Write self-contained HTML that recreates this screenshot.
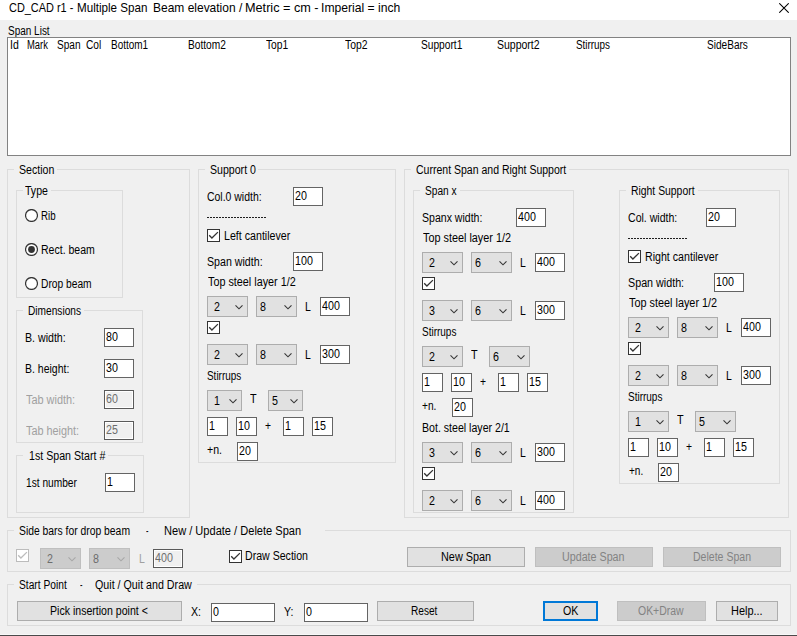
<!DOCTYPE html><html><head><meta charset="utf-8"><style>
*{margin:0;padding:0;box-sizing:border-box}
html,body{width:797px;height:636px;overflow:hidden;background:#f0f0f0;font-family:"Liberation Sans",sans-serif;font-size:12px;color:#000}
body{position:relative}
.titlebar{position:absolute;left:0;top:0;width:797px;height:20px;background:#fff}
.t{position:absolute;white-space:nowrap;line-height:14px;transform-origin:0 0}
.dtx{color:#a0a0a0}
.dtx2{color:#6d6d6d}
.dtx3{color:#838383}
.gap{position:absolute;height:1px;background:#f0f0f0}
.gb{position:absolute;border:1px solid #dcdcdc}
.lv{position:absolute;background:#fff;border:1px solid #828282}
.tb{position:absolute;background:#fff;border:1px solid #646464}
.tb.dis{background:#f0f0f0;border-color:#5a5a5a;box-shadow:inset 0 0 0 1px #fff}
.cb{position:absolute;background:#e1e1e1;border:1px solid #adadad}
.cb .arr{position:absolute}
.cb.dis{background:#cccccc;border-color:#bfbfbf}
.ck{position:absolute}
.bt{position:absolute;background:#e1e1e1;border:1px solid #adadad}
.bt.dis{background:#cccccc;border-color:#bfbfbf}
.bt.foc{border:2px solid #0078d7}
.dash{position:absolute;height:1px;background:repeating-linear-gradient(90deg,#1e1e1e 0 2px,transparent 2px 3px)}
.bot1{position:absolute;left:0;top:634px;width:797px;height:1px;background:#f8f8f8}
.bot2{position:absolute;left:0;top:635px;width:797px;height:1px;background:#4a4a4a}
</style></head><body>
<div class="titlebar"></div>
<div class="t " style="left:8.80px;top:1px;transform:scaleX(0.8408);font-size:13px">CD_CAD r1 -</div>
<div class="t " style="left:77.30px;top:1px;transform:scaleX(0.8950);font-size:13px">Multiple Span</div>
<div class="t " style="left:152.78px;top:1px;transform:scaleX(0.9218);font-size:13px">Beam elevation /</div>
<div class="t " style="left:244.92px;top:1px;transform:scaleX(0.9751);font-size:13px">Metric = cm -</div>
<div class="t " style="left:321.17px;top:1px;transform:scaleX(0.9346);font-size:13px">Imperial = inch</div>
<svg style="position:absolute;left:779px;top:3px" width="10" height="10" viewBox="0 0 10 10"><path d="M0.3 0.3 L9.7 9.7 M9.7 0.3 L0.3 9.7" stroke="#000" stroke-width="1.05"/></svg>
<div class="t " style="left:7.50px;top:24px;transform:scaleX(0.8324)">Span List</div>
<div class="lv" style="left:7px;top:37px;width:784px;height:119px"></div>
<div class="t " style="left:9.62px;top:38px;transform:scaleX(0.8759)">Id</div>
<div class="t " style="left:26.80px;top:38px;transform:scaleX(0.7844)">Mark</div>
<div class="t " style="left:56.50px;top:38px;transform:scaleX(0.8409)">Span</div>
<div class="t " style="left:85.50px;top:38px;transform:scaleX(0.8478)">Col</div>
<div class="t " style="left:110.50px;top:38px;transform:scaleX(0.8286)">Bottom1</div>
<div class="t " style="left:187.80px;top:38px;transform:scaleX(0.8486)">Bottom2</div>
<div class="t " style="left:265.90px;top:38px;transform:scaleX(0.8540)">Top1</div>
<div class="t " style="left:344.60px;top:38px;transform:scaleX(0.8654)">Top2</div>
<div class="t " style="left:421.10px;top:38px;transform:scaleX(0.8485)">Support1</div>
<div class="t " style="left:497.00px;top:38px;transform:scaleX(0.8750)">Support2</div>
<div class="t " style="left:575.50px;top:38px;transform:scaleX(0.8224)">Stirrups</div>
<div class="t " style="left:707.30px;top:38px;transform:scaleX(0.8400)">SideBars</div>
<div class="gb" style="left:7px;top:169px;width:183px;height:349px"></div>
<div class="gap" style="left:14px;top:169px;width:43px"></div>
<div class="t " style="left:19.30px;top:163px;transform:scaleX(0.8818)">Section</div>
<div class="gb" style="left:16px;top:190px;width:107px;height:108px"></div>
<div class="gap" style="left:23px;top:190px;width:28px"></div>
<div class="t " style="left:25.20px;top:184px;transform:scaleX(0.8807)">Type</div>
<svg class="ck" style="left:25px;top:209px" width="13" height="13" viewBox="0 0 13 13"><circle cx="6.5" cy="6.5" r="5.95" fill="#fff" stroke="#333" stroke-width="1.2"/></svg>
<div class="t " style="left:41.40px;top:209px;transform:scaleX(0.8073)">Rib</div>
<svg class="ck" style="left:25px;top:243px" width="13" height="13" viewBox="0 0 13 13"><circle cx="6.5" cy="6.5" r="5.95" fill="#fff" stroke="#333" stroke-width="1.2"/><circle cx="6.5" cy="6.5" r="3.4" fill="#333"/></svg>
<div class="t " style="left:41.40px;top:243px;transform:scaleX(0.8767)">Rect. beam</div>
<svg class="ck" style="left:25px;top:277px" width="13" height="13" viewBox="0 0 13 13"><circle cx="6.5" cy="6.5" r="5.95" fill="#fff" stroke="#333" stroke-width="1.2"/></svg>
<div class="t " style="left:41.40px;top:277px;transform:scaleX(0.8524)">Drop beam</div>
<div class="gb" style="left:16px;top:310px;width:127px;height:133px"></div>
<div class="gap" style="left:23px;top:310px;width:61px"></div>
<div class="t " style="left:28.40px;top:304px;transform:scaleX(0.8454)">Dimensions</div>
<div class="t " style="left:25.20px;top:331px;transform:scaleX(0.8843)">B. width:</div>
<div class="tb" style="left:104px;top:328px;width:30px;height:19px"></div>
<div class="t " style="left:106.00px;top:330px;transform:scaleX(0.8900)">80</div>
<div class="t " style="left:25.20px;top:362px;transform:scaleX(0.8736)">B. height:</div>
<div class="tb" style="left:104px;top:359px;width:30px;height:19px"></div>
<div class="t " style="left:106.00px;top:361px;transform:scaleX(0.8900)">30</div>
<div class="t dtx" style="left:26.00px;top:393px;transform:scaleX(0.9088)">Tab width:</div>
<div class="tb dis" style="left:104px;top:390px;width:30px;height:19px"></div>
<div class="t dtx2" style="left:106.00px;top:392px;transform:scaleX(0.8900)">60</div>
<div class="t dtx" style="left:26.00px;top:424px;transform:scaleX(0.9045)">Tab height:</div>
<div class="tb dis" style="left:104px;top:421px;width:30px;height:19px"></div>
<div class="t dtx2" style="left:106.00px;top:423px;transform:scaleX(0.8900)">25</div>
<div class="gb" style="left:16px;top:455px;width:128px;height:58px"></div>
<div class="gap" style="left:23px;top:455px;width:85px"></div>
<div class="t " style="left:28.60px;top:449px;transform:scaleX(0.8868)">1st Span Start #</div>
<div class="t " style="left:25.70px;top:476px;transform:scaleX(0.8479)">1st number</div>
<div class="tb" style="left:105px;top:473px;width:30px;height:19px"></div>
<div class="t " style="left:107.00px;top:475px;transform:scaleX(0.8900)">1</div>
<div class="gb" style="left:198px;top:169px;width:198px;height:294px"></div>
<div class="gap" style="left:205px;top:169px;width:53px"></div>
<div class="t " style="left:210.00px;top:163px;transform:scaleX(0.8823)">Support 0</div>
<div class="t " style="left:207.00px;top:190px;transform:scaleX(0.8707)">Col.0 width:</div>
<div class="tb" style="left:293px;top:187px;width:30px;height:19px"></div>
<div class="t " style="left:295.00px;top:189px;transform:scaleX(0.8900)">20</div>
<div class="dash" style="left:207px;top:217px;width:60px"></div>
<svg class="ck" style="left:207px;top:229px" width="13" height="13" viewBox="0 0 13 13"><rect x="0.5" y="0.5" width="12" height="12" fill="#fff" stroke="#333"/><path d="M2.2 6.3 L4.9 9 L10.9 3.1" fill="none" stroke="#333" stroke-width="1.3"/></svg>
<div class="t " style="left:223.70px;top:229px;transform:scaleX(0.8874)">Left cantilever</div>
<div class="t " style="left:207.00px;top:255px;transform:scaleX(0.8866)">Span width:</div>
<div class="tb" style="left:293px;top:252px;width:30px;height:19px"></div>
<div class="t " style="left:295.00px;top:254px;transform:scaleX(0.8900)">100</div>
<div class="t " style="left:208.20px;top:275px;transform:scaleX(0.9006)">Top steel layer 1/2</div>
<div class="cb" style="left:207px;top:296px;width:41px;height:21px"><svg class="arr" style="left:27px;top:7px" width="9" height="6" viewBox="0 0 9 6"><path d="M0.5 1.3 L4 4.8 L7.5 1.3" fill="none" stroke="#383838" stroke-width="1.15"/></svg></div>
<div class="t " style="left:213.50px;top:300px;transform:scaleX(0.8900)">2</div>
<div class="cb" style="left:256px;top:296px;width:41px;height:21px"><svg class="arr" style="left:27px;top:7px" width="9" height="6" viewBox="0 0 9 6"><path d="M0.5 1.3 L4 4.8 L7.5 1.3" fill="none" stroke="#383838" stroke-width="1.15"/></svg></div>
<div class="t " style="left:259.50px;top:300px;transform:scaleX(0.8900)">8</div>
<div class="t " style="left:305.40px;top:300px;transform:scaleX(0.8700)">L</div>
<div class="tb" style="left:320px;top:297px;width:30px;height:19px"></div>
<div class="t " style="left:322.00px;top:299px;transform:scaleX(0.8900)">400</div>
<svg class="ck" style="left:207px;top:321px" width="13" height="13" viewBox="0 0 13 13"><rect x="0.5" y="0.5" width="12" height="12" fill="#fff" stroke="#333"/><path d="M2.2 6.3 L4.9 9 L10.9 3.1" fill="none" stroke="#333" stroke-width="1.3"/></svg>
<div class="cb" style="left:207px;top:344px;width:41px;height:21px"><svg class="arr" style="left:27px;top:7px" width="9" height="6" viewBox="0 0 9 6"><path d="M0.5 1.3 L4 4.8 L7.5 1.3" fill="none" stroke="#383838" stroke-width="1.15"/></svg></div>
<div class="t " style="left:213.50px;top:348px;transform:scaleX(0.8900)">2</div>
<div class="cb" style="left:256px;top:344px;width:41px;height:21px"><svg class="arr" style="left:27px;top:7px" width="9" height="6" viewBox="0 0 9 6"><path d="M0.5 1.3 L4 4.8 L7.5 1.3" fill="none" stroke="#383838" stroke-width="1.15"/></svg></div>
<div class="t " style="left:259.50px;top:348px;transform:scaleX(0.8900)">8</div>
<div class="t " style="left:305.40px;top:348px;transform:scaleX(0.8700)">L</div>
<div class="tb" style="left:320px;top:345px;width:30px;height:19px"></div>
<div class="t " style="left:322.00px;top:347px;transform:scaleX(0.8900)">300</div>
<div class="t " style="left:207.00px;top:369px;transform:scaleX(0.8272)">Stirrups</div>
<div class="cb" style="left:207px;top:390px;width:35px;height:21px"><svg class="arr" style="left:21px;top:7px" width="9" height="6" viewBox="0 0 9 6"><path d="M0.5 1.3 L4 4.8 L7.5 1.3" fill="none" stroke="#383838" stroke-width="1.15"/></svg></div>
<div class="t " style="left:213.50px;top:394px;transform:scaleX(0.8900)">1</div>
<div class="t " style="left:249.80px;top:392px;transform:scaleX(0.9000)">T</div>
<div class="cb" style="left:268px;top:390px;width:35px;height:21px"><svg class="arr" style="left:21px;top:7px" width="9" height="6" viewBox="0 0 9 6"><path d="M0.5 1.3 L4 4.8 L7.5 1.3" fill="none" stroke="#383838" stroke-width="1.15"/></svg></div>
<div class="t " style="left:271.50px;top:394px;transform:scaleX(0.8900)">5</div>
<div class="tb" style="left:207px;top:417px;width:21px;height:19px"></div>
<div class="t " style="left:209.00px;top:419px;transform:scaleX(0.8900)">1</div>
<div class="tb" style="left:236px;top:417px;width:21px;height:19px"></div>
<div class="t " style="left:238.00px;top:419px;transform:scaleX(0.8900)">10</div>
<div class="t " style="left:265.00px;top:419px;transform:scaleX(0.8571)">+</div>
<div class="tb" style="left:283px;top:417px;width:21px;height:19px"></div>
<div class="t " style="left:285.00px;top:419px;transform:scaleX(0.8900)">1</div>
<div class="tb" style="left:312px;top:417px;width:21px;height:19px"></div>
<div class="t " style="left:314.00px;top:419px;transform:scaleX(0.8900)">15</div>
<div class="t " style="left:207.00px;top:443px;transform:scaleX(0.8812)">+n.</div>
<div class="tb" style="left:237px;top:442px;width:21px;height:19px"></div>
<div class="t " style="left:239.00px;top:444px;transform:scaleX(0.8900)">20</div>
<div class="gb" style="left:404px;top:169px;width:385px;height:349px"></div>
<div class="gap" style="left:411px;top:169px;width:158px"></div>
<div class="t " style="left:415.50px;top:163px;transform:scaleX(0.8762)">Current Span and Right Support</div>
<div class="gb" style="left:413px;top:190px;width:161px;height:323px"></div>
<div class="gap" style="left:420px;top:190px;width:40px"></div>
<div class="t " style="left:425.40px;top:184px;transform:scaleX(0.8458)">Span x</div>
<div class="t " style="left:422.30px;top:211px;transform:scaleX(0.8790)">Spanx width:</div>
<div class="tb" style="left:516px;top:208px;width:30px;height:19px"></div>
<div class="t " style="left:518.00px;top:210px;transform:scaleX(0.8900)">400</div>
<div class="t " style="left:422.80px;top:231px;transform:scaleX(0.9036)">Top steel layer 1/2</div>
<div class="cb" style="left:422px;top:252px;width:41px;height:21px"><svg class="arr" style="left:27px;top:7px" width="9" height="6" viewBox="0 0 9 6"><path d="M0.5 1.3 L4 4.8 L7.5 1.3" fill="none" stroke="#383838" stroke-width="1.15"/></svg></div>
<div class="t " style="left:428.50px;top:256px;transform:scaleX(0.8900)">2</div>
<div class="cb" style="left:471px;top:252px;width:41px;height:21px"><svg class="arr" style="left:27px;top:7px" width="9" height="6" viewBox="0 0 9 6"><path d="M0.5 1.3 L4 4.8 L7.5 1.3" fill="none" stroke="#383838" stroke-width="1.15"/></svg></div>
<div class="t " style="left:474.50px;top:256px;transform:scaleX(0.8900)">6</div>
<div class="t " style="left:520.40px;top:256px;transform:scaleX(0.8700)">L</div>
<div class="tb" style="left:535px;top:253px;width:30px;height:19px"></div>
<div class="t " style="left:537.00px;top:255px;transform:scaleX(0.8900)">400</div>
<svg class="ck" style="left:422px;top:277px" width="13" height="13" viewBox="0 0 13 13"><rect x="0.5" y="0.5" width="12" height="12" fill="#fff" stroke="#333"/><path d="M2.2 6.3 L4.9 9 L10.9 3.1" fill="none" stroke="#333" stroke-width="1.3"/></svg>
<div class="cb" style="left:422px;top:300px;width:41px;height:21px"><svg class="arr" style="left:27px;top:7px" width="9" height="6" viewBox="0 0 9 6"><path d="M0.5 1.3 L4 4.8 L7.5 1.3" fill="none" stroke="#383838" stroke-width="1.15"/></svg></div>
<div class="t " style="left:428.50px;top:304px;transform:scaleX(0.8900)">3</div>
<div class="cb" style="left:471px;top:300px;width:41px;height:21px"><svg class="arr" style="left:27px;top:7px" width="9" height="6" viewBox="0 0 9 6"><path d="M0.5 1.3 L4 4.8 L7.5 1.3" fill="none" stroke="#383838" stroke-width="1.15"/></svg></div>
<div class="t " style="left:474.50px;top:304px;transform:scaleX(0.8900)">6</div>
<div class="t " style="left:520.40px;top:304px;transform:scaleX(0.8700)">L</div>
<div class="tb" style="left:535px;top:301px;width:30px;height:19px"></div>
<div class="t " style="left:537.00px;top:303px;transform:scaleX(0.8900)">300</div>
<div class="t " style="left:422.00px;top:325px;transform:scaleX(0.8320)">Stirrups</div>
<div class="cb" style="left:422px;top:346px;width:41px;height:21px"><svg class="arr" style="left:27px;top:7px" width="9" height="6" viewBox="0 0 9 6"><path d="M0.5 1.3 L4 4.8 L7.5 1.3" fill="none" stroke="#383838" stroke-width="1.15"/></svg></div>
<div class="t " style="left:428.50px;top:350px;transform:scaleX(0.8900)">2</div>
<div class="t " style="left:471.00px;top:348px;transform:scaleX(0.9000)">T</div>
<div class="cb" style="left:489px;top:346px;width:41px;height:21px"><svg class="arr" style="left:27px;top:7px" width="9" height="6" viewBox="0 0 9 6"><path d="M0.5 1.3 L4 4.8 L7.5 1.3" fill="none" stroke="#383838" stroke-width="1.15"/></svg></div>
<div class="t " style="left:492.50px;top:350px;transform:scaleX(0.8900)">6</div>
<div class="tb" style="left:422px;top:373px;width:21px;height:19px"></div>
<div class="t " style="left:424.00px;top:375px;transform:scaleX(0.8900)">1</div>
<div class="tb" style="left:451px;top:373px;width:21px;height:19px"></div>
<div class="t " style="left:453.00px;top:375px;transform:scaleX(0.8900)">10</div>
<div class="t " style="left:480.00px;top:375px;transform:scaleX(0.8571)">+</div>
<div class="tb" style="left:498px;top:373px;width:21px;height:19px"></div>
<div class="t " style="left:500.00px;top:375px;transform:scaleX(0.8900)">1</div>
<div class="tb" style="left:527px;top:373px;width:21px;height:19px"></div>
<div class="t " style="left:529.00px;top:375px;transform:scaleX(0.8900)">15</div>
<div class="t " style="left:422.30px;top:399px;transform:scaleX(0.8452)">+n.</div>
<div class="tb" style="left:452px;top:398px;width:21px;height:19px"></div>
<div class="t " style="left:454.00px;top:400px;transform:scaleX(0.8900)">20</div>
<div class="t " style="left:422.30px;top:421px;transform:scaleX(0.8825)">Bot. steel layer 2/1</div>
<div class="cb" style="left:422px;top:442px;width:41px;height:21px"><svg class="arr" style="left:27px;top:7px" width="9" height="6" viewBox="0 0 9 6"><path d="M0.5 1.3 L4 4.8 L7.5 1.3" fill="none" stroke="#383838" stroke-width="1.15"/></svg></div>
<div class="t " style="left:428.50px;top:446px;transform:scaleX(0.8900)">3</div>
<div class="cb" style="left:471px;top:442px;width:41px;height:21px"><svg class="arr" style="left:27px;top:7px" width="9" height="6" viewBox="0 0 9 6"><path d="M0.5 1.3 L4 4.8 L7.5 1.3" fill="none" stroke="#383838" stroke-width="1.15"/></svg></div>
<div class="t " style="left:474.50px;top:446px;transform:scaleX(0.8900)">6</div>
<div class="t " style="left:520.40px;top:446px;transform:scaleX(0.8700)">L</div>
<div class="tb" style="left:535px;top:443px;width:30px;height:19px"></div>
<div class="t " style="left:537.00px;top:445px;transform:scaleX(0.8900)">300</div>
<svg class="ck" style="left:422px;top:467px" width="13" height="13" viewBox="0 0 13 13"><rect x="0.5" y="0.5" width="12" height="12" fill="#fff" stroke="#333"/><path d="M2.2 6.3 L4.9 9 L10.9 3.1" fill="none" stroke="#333" stroke-width="1.3"/></svg>
<div class="cb" style="left:422px;top:490px;width:41px;height:21px"><svg class="arr" style="left:27px;top:7px" width="9" height="6" viewBox="0 0 9 6"><path d="M0.5 1.3 L4 4.8 L7.5 1.3" fill="none" stroke="#383838" stroke-width="1.15"/></svg></div>
<div class="t " style="left:428.50px;top:494px;transform:scaleX(0.8900)">2</div>
<div class="cb" style="left:471px;top:490px;width:41px;height:21px"><svg class="arr" style="left:27px;top:7px" width="9" height="6" viewBox="0 0 9 6"><path d="M0.5 1.3 L4 4.8 L7.5 1.3" fill="none" stroke="#383838" stroke-width="1.15"/></svg></div>
<div class="t " style="left:474.50px;top:494px;transform:scaleX(0.8900)">6</div>
<div class="t " style="left:520.40px;top:494px;transform:scaleX(0.8700)">L</div>
<div class="tb" style="left:535px;top:491px;width:30px;height:19px"></div>
<div class="t " style="left:537.00px;top:493px;transform:scaleX(0.8900)">400</div>
<div class="gb" style="left:619px;top:190px;width:161px;height:294px"></div>
<div class="gap" style="left:626px;top:190px;width:72px"></div>
<div class="t " style="left:631.40px;top:184px;transform:scaleX(0.8657)">Right Support</div>
<div class="t " style="left:627.50px;top:211px;transform:scaleX(0.8799)">Col. width:</div>
<div class="tb" style="left:706px;top:208px;width:30px;height:19px"></div>
<div class="t " style="left:708.00px;top:210px;transform:scaleX(0.8900)">20</div>
<div class="dash" style="left:628px;top:238px;width:60px"></div>
<svg class="ck" style="left:628px;top:250px" width="13" height="13" viewBox="0 0 13 13"><rect x="0.5" y="0.5" width="12" height="12" fill="#fff" stroke="#333"/><path d="M2.2 6.3 L4.9 9 L10.9 3.1" fill="none" stroke="#333" stroke-width="1.3"/></svg>
<div class="t " style="left:644.70px;top:250px;transform:scaleX(0.8862)">Right cantilever</div>
<div class="t " style="left:628.00px;top:276px;transform:scaleX(0.8946)">Span width:</div>
<div class="tb" style="left:714px;top:273px;width:30px;height:19px"></div>
<div class="t " style="left:716.00px;top:275px;transform:scaleX(0.8900)">100</div>
<div class="t " style="left:628.60px;top:296px;transform:scaleX(0.9047)">Top steel layer 1/2</div>
<div class="cb" style="left:628px;top:317px;width:41px;height:21px"><svg class="arr" style="left:27px;top:7px" width="9" height="6" viewBox="0 0 9 6"><path d="M0.5 1.3 L4 4.8 L7.5 1.3" fill="none" stroke="#383838" stroke-width="1.15"/></svg></div>
<div class="t " style="left:634.50px;top:321px;transform:scaleX(0.8900)">2</div>
<div class="cb" style="left:677px;top:317px;width:41px;height:21px"><svg class="arr" style="left:27px;top:7px" width="9" height="6" viewBox="0 0 9 6"><path d="M0.5 1.3 L4 4.8 L7.5 1.3" fill="none" stroke="#383838" stroke-width="1.15"/></svg></div>
<div class="t " style="left:680.50px;top:321px;transform:scaleX(0.8900)">8</div>
<div class="t " style="left:726.40px;top:321px;transform:scaleX(0.8700)">L</div>
<div class="tb" style="left:741px;top:318px;width:30px;height:19px"></div>
<div class="t " style="left:743.00px;top:320px;transform:scaleX(0.8900)">400</div>
<svg class="ck" style="left:628px;top:342px" width="13" height="13" viewBox="0 0 13 13"><rect x="0.5" y="0.5" width="12" height="12" fill="#fff" stroke="#333"/><path d="M2.2 6.3 L4.9 9 L10.9 3.1" fill="none" stroke="#333" stroke-width="1.3"/></svg>
<div class="cb" style="left:628px;top:365px;width:41px;height:21px"><svg class="arr" style="left:27px;top:7px" width="9" height="6" viewBox="0 0 9 6"><path d="M0.5 1.3 L4 4.8 L7.5 1.3" fill="none" stroke="#383838" stroke-width="1.15"/></svg></div>
<div class="t " style="left:634.50px;top:369px;transform:scaleX(0.8900)">2</div>
<div class="cb" style="left:677px;top:365px;width:41px;height:21px"><svg class="arr" style="left:27px;top:7px" width="9" height="6" viewBox="0 0 9 6"><path d="M0.5 1.3 L4 4.8 L7.5 1.3" fill="none" stroke="#383838" stroke-width="1.15"/></svg></div>
<div class="t " style="left:680.50px;top:369px;transform:scaleX(0.8900)">8</div>
<div class="t " style="left:726.40px;top:369px;transform:scaleX(0.8700)">L</div>
<div class="tb" style="left:741px;top:366px;width:30px;height:19px"></div>
<div class="t " style="left:743.00px;top:368px;transform:scaleX(0.8900)">300</div>
<div class="t " style="left:628.00px;top:390px;transform:scaleX(0.8320)">Stirrups</div>
<div class="cb" style="left:628px;top:411px;width:41px;height:21px"><svg class="arr" style="left:27px;top:7px" width="9" height="6" viewBox="0 0 9 6"><path d="M0.5 1.3 L4 4.8 L7.5 1.3" fill="none" stroke="#383838" stroke-width="1.15"/></svg></div>
<div class="t " style="left:634.50px;top:415px;transform:scaleX(0.8900)">1</div>
<div class="t " style="left:677.00px;top:413px;transform:scaleX(0.9000)">T</div>
<div class="cb" style="left:695px;top:411px;width:41px;height:21px"><svg class="arr" style="left:27px;top:7px" width="9" height="6" viewBox="0 0 9 6"><path d="M0.5 1.3 L4 4.8 L7.5 1.3" fill="none" stroke="#383838" stroke-width="1.15"/></svg></div>
<div class="t " style="left:698.50px;top:415px;transform:scaleX(0.8900)">5</div>
<div class="tb" style="left:628px;top:438px;width:21px;height:19px"></div>
<div class="t " style="left:630.00px;top:440px;transform:scaleX(0.8900)">1</div>
<div class="tb" style="left:657px;top:438px;width:21px;height:19px"></div>
<div class="t " style="left:659.00px;top:440px;transform:scaleX(0.8900)">10</div>
<div class="t " style="left:686.00px;top:440px;transform:scaleX(0.8571)">+</div>
<div class="tb" style="left:704px;top:438px;width:21px;height:19px"></div>
<div class="t " style="left:706.00px;top:440px;transform:scaleX(0.8900)">1</div>
<div class="tb" style="left:733px;top:438px;width:21px;height:19px"></div>
<div class="t " style="left:735.00px;top:440px;transform:scaleX(0.8900)">15</div>
<div class="t " style="left:628.60px;top:464px;transform:scaleX(0.8333)">+n.</div>
<div class="tb" style="left:658px;top:463px;width:21px;height:19px"></div>
<div class="t " style="left:660.00px;top:465px;transform:scaleX(0.8900)">20</div>
<div class="gb" style="left:7px;top:530px;width:784px;height:42px"></div>
<div class="gap" style="left:14px;top:530px;width:311px"></div>
<div class="t " style="left:19.00px;top:524px;transform:scaleX(0.8622)">Side bars for drop beam</div>
<div class="t " style="left:146.30px;top:524px;transform:scaleX(0.6250)">-</div>
<div class="t " style="left:164.40px;top:524px;transform:scaleX(0.9218)">New / Update / Delete Span</div>
<svg class="ck" style="left:16px;top:549px" width="13" height="13" viewBox="0 0 13 13"><rect x="0.5" y="0.5" width="12" height="12" fill="#fff" stroke="#bcbcbc"/><path d="M2.2 6.3 L4.9 9 L10.9 3.1" fill="none" stroke="#bcbcbc" stroke-width="1.3"/></svg>
<div class="cb dis" style="left:40px;top:548px;width:41px;height:21px"><svg class="arr" style="left:27px;top:7px" width="9" height="6" viewBox="0 0 9 6"><path d="M0.5 1.3 L4 4.8 L7.5 1.3" fill="none" stroke="#a8a8a8" stroke-width="1.15"/></svg></div>
<div class="t dtx2" style="left:46.50px;top:552px;transform:scaleX(0.8900)">2</div>
<div class="cb dis" style="left:89px;top:548px;width:41px;height:21px"><svg class="arr" style="left:27px;top:7px" width="9" height="6" viewBox="0 0 9 6"><path d="M0.5 1.3 L4 4.8 L7.5 1.3" fill="none" stroke="#a8a8a8" stroke-width="1.15"/></svg></div>
<div class="t dtx2" style="left:92.50px;top:552px;transform:scaleX(0.8900)">8</div>
<div class="t dtx" style="left:138.80px;top:552px;transform:scaleX(0.8700)">L</div>
<div class="tb dis" style="left:153px;top:549px;width:30px;height:19px"></div>
<div class="t dtx2" style="left:155.00px;top:551px;transform:scaleX(0.8900)">400</div>
<svg class="ck" style="left:229px;top:550px" width="13" height="13" viewBox="0 0 13 13"><rect x="0.5" y="0.5" width="12" height="12" fill="#fff" stroke="#333"/><path d="M2.2 6.3 L4.9 9 L10.9 3.1" fill="none" stroke="#333" stroke-width="1.3"/></svg>
<div class="t " style="left:245.40px;top:549px;transform:scaleX(0.8828)">Draw Section</div>
<div class="bt" style="left:407px;top:547px;width:118px;height:20px"></div>
<div class="t " style="left:441.00px;top:550px;transform:scaleX(0.9051)">New Span</div>
<div class="bt dis" style="left:535px;top:547px;width:118px;height:20px"></div>
<div class="t dtx3" style="left:562.40px;top:550px;transform:scaleX(0.8922)">Update Span</div>
<div class="bt dis" style="left:663px;top:547px;width:118px;height:20px"></div>
<div class="t dtx3" style="left:692.70px;top:550px;transform:scaleX(0.8780)">Delete Span</div>
<div class="gb" style="left:7px;top:584px;width:784px;height:42px"></div>
<div class="gap" style="left:14px;top:584px;width:183px"></div>
<div class="t " style="left:19.00px;top:578px;transform:scaleX(0.8520)">Start Point</div>
<div class="t " style="left:80.30px;top:578px;transform:scaleX(0.6250)">-</div>
<div class="t " style="left:94.90px;top:578px;transform:scaleX(0.8905)">Quit / Quit and Draw</div>
<div class="bt" style="left:17px;top:601px;width:165px;height:20px"></div>
<div class="t " style="left:50.20px;top:604px;transform:scaleX(0.8807)">Pick insertion point &lt;</div>
<div class="t " style="left:191.00px;top:605px;transform:scaleX(0.8815)">X:</div>
<div class="tb" style="left:211px;top:603px;width:64px;height:19px"></div>
<div class="t " style="left:213.00px;top:605px;transform:scaleX(0.8900)">0</div>
<div class="t " style="left:283.50px;top:605px;transform:scaleX(0.8799)">Y:</div>
<div class="tb" style="left:304px;top:603px;width:64px;height:19px"></div>
<div class="t " style="left:306.00px;top:605px;transform:scaleX(0.8900)">0</div>
<div class="bt" style="left:377px;top:601px;width:97px;height:20px"></div>
<div class="t " style="left:411.40px;top:604px;transform:scaleX(0.8403)">Reset</div>
<div class="bt foc" style="left:543px;top:601px;width:55px;height:20px"></div>
<div class="t " style="left:562.50px;top:604px;transform:scaleX(0.8884)">OK</div>
<div class="bt dis" style="left:617px;top:601px;width:89px;height:20px"></div>
<div class="t dtx3" style="left:637.50px;top:604px;transform:scaleX(0.8713)">OK+Draw</div>
<div class="bt" style="left:716px;top:601px;width:62px;height:20px"></div>
<div class="t " style="left:731.00px;top:604px;transform:scaleX(0.9113)">Help...</div>
<div class="bot1"></div><div class="bot2"></div>
</body></html>
